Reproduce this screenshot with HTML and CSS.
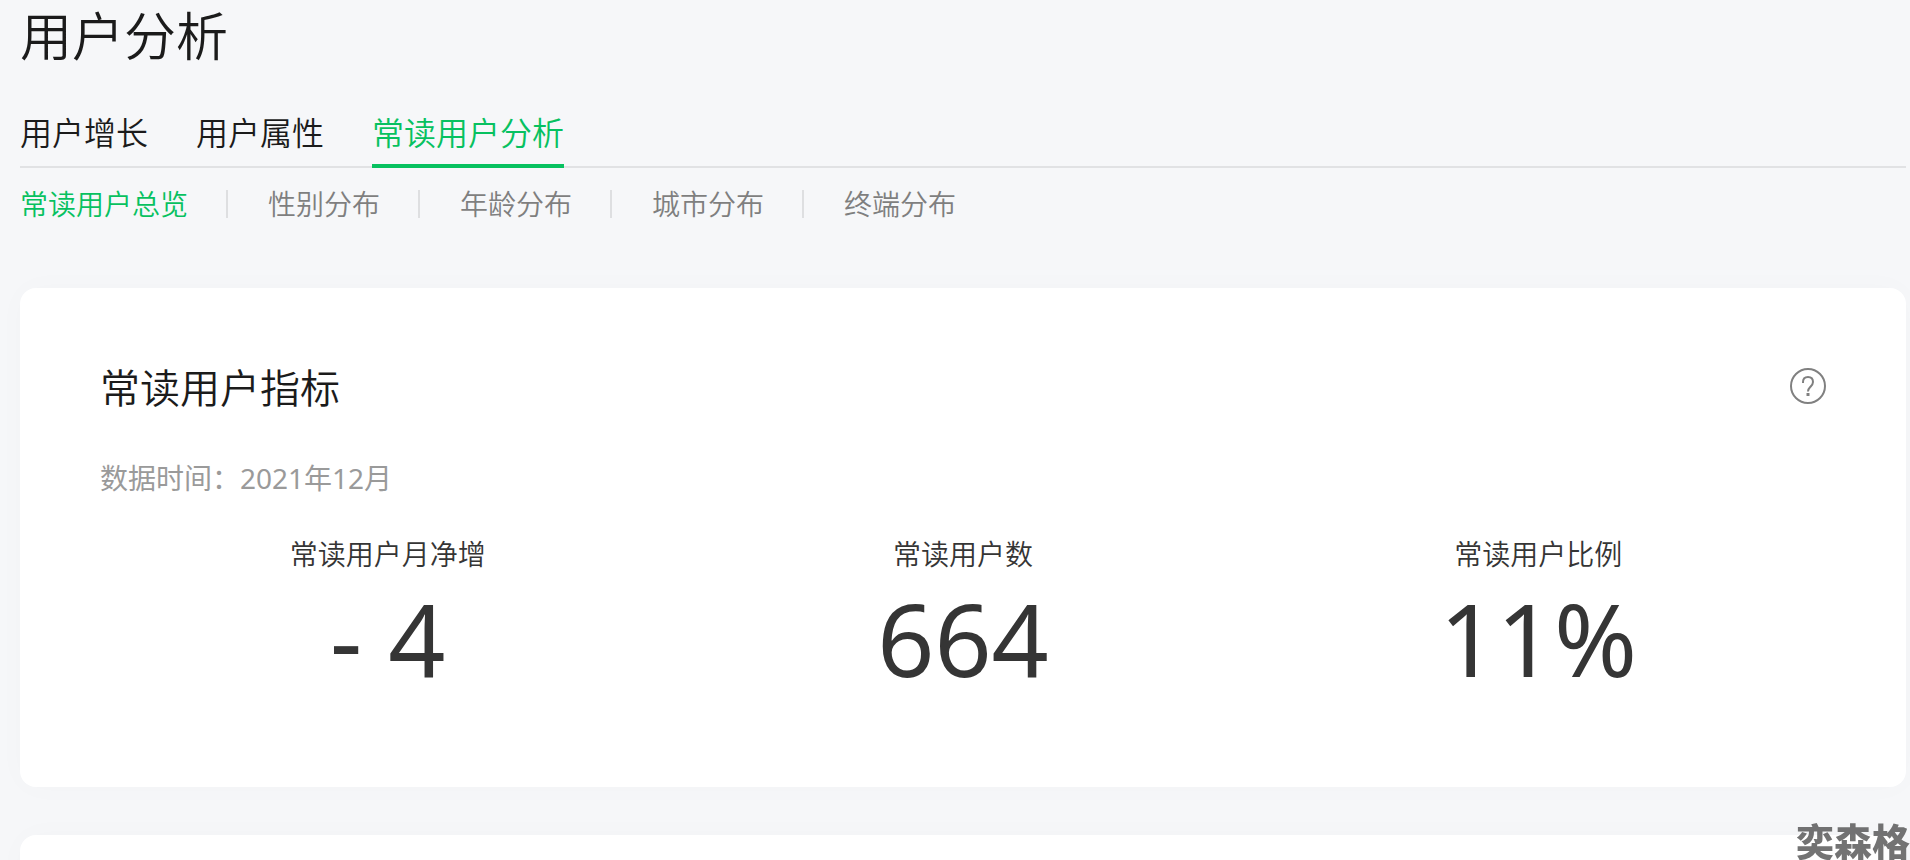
FILE: index.html
```html
<!DOCTYPE html>
<html lang="zh-CN">
<head>
    <meta charset="UTF-8">
    <title>用户分析</title>
    <link rel="stylesheet" href="styles.css">
</head>
<body>
    <div class="page">
        <h1 class="title">用户分析</h1>
        <nav class="tabs">
            <a class="tab" href="#growth">用户增长</a>
            <a class="tab" href="#attributes">用户属性</a>
            <a class="tab active" href="#regular">常读用户分析</a>
        </nav>
        <nav class="subtabs">
            <a class="subtab active" href="#overview">常读用户总览</a>
            <a class="subtab" href="#gender">性别分布</a>
            <a class="subtab" href="#age">年龄分布</a>
            <a class="subtab" href="#city">城市分布</a>
            <a class="subtab" href="#device">终端分布</a>
        </nav>

        <div class="cards">
            <section class="card" id="overview">
                <div class="card-header">
                    <h2 class="card-title">常读用户指标</h2>
                    <button class="help" type="button" aria-label="指标说明">
                        <svg width="36" height="36" viewBox="0 0 36 36" fill="none" stroke="currentColor" stroke-width="2">
                            <circle cx="18" cy="18" r="17"/>
                            <path d="M13 15v-1c0-3 2-5 5-5s5 2 5 5c0 2-1 3.200-2.500 4.700S18 21 18 23.500"/>
                            <path d="M16.500 26.500h3" stroke-width="3"/>
                        </svg>
                    </button>
                </div>
                <p class="date">数据时间：2021年12月</p>
                <dl class="metrics">
                    <div class="metric">
                        <dt>常读用户月净增</dt>
                        <dd>- 4</dd>
                    </div>
                    <div class="metric">
                        <dt>常读用户数</dt>
                        <dd>664</dd>
                    </div>
                    <div class="metric">
                        <dt>常读用户比例</dt>
                        <dd>11%</dd>
                    </div>
                </dl>
            </section>

            <section class="card" id="gender"></section>
        </div>
    </div>
    <div class="watermark">奕森格</div>
</body>
</html>
```
FILE: styles.css
```css
* {
    box-sizing: border-box;
    margin: 0;
    padding: 0;
}

html {
    height: 100%;
}

body {
    height: 100%;
    overflow: hidden;
    background-color: #f6f7f9;
    color: #1b1b1b;
    font-family: "Noto Sans", "Noto Sans CJK SC", sans-serif;
    font-size: 28px;
    font-weight: 350;
    line-height: 40px;
}

a {
    color: inherit;
    text-decoration: none;
}

.page {
    padding: 0 4px 0 20px;
}

.title {
    font-size: 52px;
    font-weight: 350;
    line-height: 72px;
}

.tabs {
    display: flex;
    gap: 48px;
    margin-top: 36px;
    border-bottom: 2px solid #e1e2e4;
}

.tab {
    height: 60px;
    margin-bottom: -2px; /* underline covers the border */
    font-size: 32px;
    line-height: 50px;
}

.tab.active {
    color: #07c160;
    border-bottom: 4px solid #07c160;
}

.subtabs {
    display: flex;
    margin-top: 22px;
    color: #7f7f7f;
}

.subtab {
    line-height: 28px;
}

.subtab + .subtab {
    margin-left: 38px;
    padding-left: 40px;
    border-left: 2px solid #dedfe1;
}

.subtab.active {
    color: #07c160;
}

.cards {
    display: grid;
    gap: 48px;
    margin-top: 70px;
}

.card {
    min-height: 499px;
    padding: 72px 80px;
    background-color: #fff;
    border-radius: 16px;
    box-shadow: 0 0 32px rgba(0, 0, 0, 0.02);
}

.card-header {
    display: flex;
    align-items: flex-start;
    justify-content: space-between;
}

.card-title {
    font-size: 40px;
    font-weight: 350;
    line-height: 56px;
}

.help {
    width: 36px;
    height: 36px;
    margin-top: 8px;
    border: none;
    background: none;
    color: #808080;
    cursor: pointer;
}

.help svg {
    display: block;
}

.date {
    margin-top: 42px;
    color: #9a9a9a;
    font-weight: 400;
}

.metrics {
    display: grid;
    grid-template-columns: repeat(3, 1fr);
    margin-top: 36px;
    color: #353535;
    text-align: center;
}

.metric dd {
    font-size: 100px;
    font-weight: 400;
    line-height: 128px;
}

.watermark {
    position: fixed;
    right: 0;
    bottom: 0;
    color: rgba(80, 80, 80, 0.8);
    font-size: 38px;
    font-weight: 900;
    line-height: 38px;
}
```
